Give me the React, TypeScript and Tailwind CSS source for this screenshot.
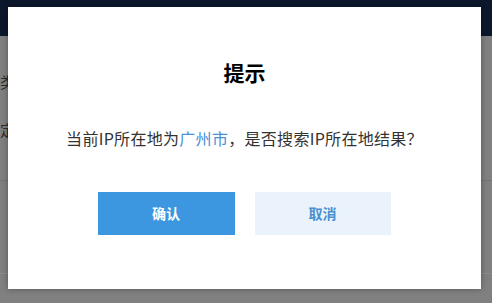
import React from 'react';

const font = { fontFamily: '"Noto Sans CJK SC", "Liberation Sans", sans-serif' };

export default function App() {
  return (
    <div lang="zh-CN" className="relative w-[492px] h-[303px] overflow-hidden bg-white" style={font}>
      {/* page behind the dialog */}
      <div className="h-9 bg-[#0b182b]" />
      <div className="h-[267px] bg-[#808080] flex flex-col text-[15px] text-[#2b2b2b]">
        <div className="h-[34px]" />
        <div className="leading-6">类型</div>
        <div className="h-[24px]" />
        <div className="leading-6">定位</div>
        <div className="h-[38px]" />
        <div className="border-t border-[#737373]" />
        <div className="h-[92px]" />
        <div className="border-t border-[#8c8c8c]" />
      </div>

      {/* dialog */}
      <div className="absolute left-2 top-[7px] w-[473px] h-[282px] bg-white shadow-[0_0_6px_rgba(0,0,0,0.35)] flex flex-col items-center pt-[51px]">
        <h2 className="text-[21px] leading-7 font-bold text-black">提示</h2>
        <p className="mt-10 text-[16px] leading-6 tracking-[0.3px] text-[#333]">
          当前IP所在地为<span className="text-[#4a90d6]">广州市</span>，是否搜索IP所在地结果？
        </p>
        <div className="mt-[42px] flex gap-5 -ml-[1px]">
          <button className="w-[137px] h-[43px] bg-[#3d97e0] text-white text-[14px] font-bold">确认</button>
          <button className="w-[136px] h-[43px] bg-[#eaf3fb] text-[#4a8fd0] text-[14px] font-bold">取消</button>
        </div>
      </div>
    </div>
  );
}
